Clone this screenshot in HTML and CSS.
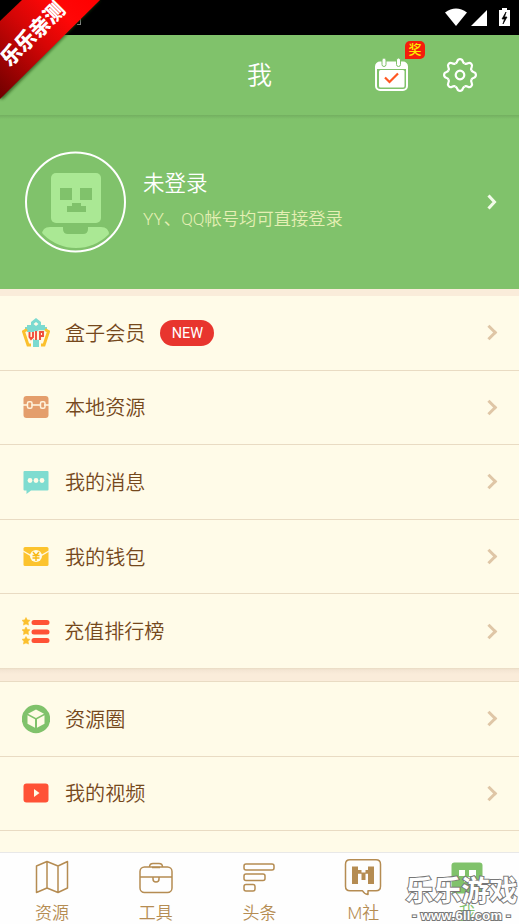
FILE: index.html
```html
<!DOCTYPE html>
<html lang="zh-CN">
<head>
<meta charset="utf-8">
<title>我</title>
<link rel="stylesheet" href="styles.css">
</head>
<body>
<div class="app">
  <div class="status">
    <span class="status-note"></span>
    <svg width="68" height="20" viewBox="0 0 68 20" fill="#fff">
      <path d="M0 4.500Q11-3.500 22 4.500L11 18Z"/>
      <path d="M26 18 42 2V18Z"/>
      <path d="M54 2h3V0h5v2h3v16H54Z"/>
      <path d="m61 4-4 7h2.500l-1.500 5 4-7h-2.500Z" fill="#000" stroke="#000" stroke-width=".7"/>
    </svg>
  </div>
  <header class="header">
    <h1>我</h1>
    <div class="header-actions">
      <div class="checkin">
        <svg width="34" height="34" viewBox="0 0 34 34" fill="none">
          <rect x="1" y="4.500" width="31" height="27.500" rx="4" stroke="#fff" stroke-width="2"/>
          <path d="M1 11V8q0-3.500 4-3.500h23q4 0 4 3.500v3Z" fill="#fff"/>
          <rect x="4" y="12" width="25.500" height="17.500" rx="1.500" fill="#fff"/>
          <rect x="7" y="0" width="4" height="8.500" rx="2" fill="#fff" stroke="#80c26b"/>
          <rect x="21.500" y="0" width="4" height="8.500" rx="2" fill="#fff" stroke="#80c26b"/>
          <path d="m10 19.500 4.500 4.500 8.500-8.500" stroke="#ff5722" stroke-width="2.200"/>
        </svg>
        <span class="prize">奖</span>
      </div>
      <svg class="gear" width="36" height="36" viewBox="-18 -18 36 36" fill="none" stroke="#fff" stroke-width="2.200">
        <defs><path id="tooth" d="M-4.700-11.400C-1.600-12.700-3.800-15.900 0-15.900S1.600-12.700 4.700-11.400"/></defs>
        <use href="#tooth"/><use href="#tooth" transform="rotate(45)"/><use href="#tooth" transform="rotate(90)"/><use href="#tooth" transform="rotate(135)"/>
        <use href="#tooth" transform="rotate(180)"/><use href="#tooth" transform="rotate(225)"/><use href="#tooth" transform="rotate(270)"/><use href="#tooth" transform="rotate(315)"/>
        <circle r="4.300"/>
      </svg>
    </div>
  </header>

  <section class="profile">
    <svg class="avatar" width="102" height="102" viewBox="0 0 102 102">
      <defs><clipPath id="bust"><circle cx="51" cy="51" r="46"/></clipPath></defs>
      <circle cx="50.500" cy="51" r="49.500" fill="none" stroke="#fff" stroke-width="2"/>
      <rect x="26" y="22" width="50" height="50" rx="5" fill="#aae894"/>
      <path d="M35 37h12v12H35ZM55 37h12v12H55ZM47 52h9v3h5v6H42v-6h5Z" fill="#80c26b"/>
      <path d="M25 76h13v2q0 5 5 5h15q5 0 5-5v-2h13q8 0 8 8v18H17V84q0-8 8-8Z" fill="#aae894" clip-path="url(#bust)"/>
    </svg>
    <div class="profile-text">
      <div class="name">未登录</div>
      <div class="hint">YY、QQ帐号均可直接登录</div>
    </div>
    <svg width="10" height="16" viewBox="0 0 10 16" fill="none" stroke="#f2fbe9" stroke-width="3"><path d="m1.500 1.500 6 6.500-6 6.500"/></svg>
  </section>

  <ul class="list">
    <li>
      <svg class="icon" width="28" height="30" viewBox="0 0 28 30">
        <path d="m14 0 5 4v3h4v2h2v3h-2v2H5v-2H3V9h2V7h4V4ZM14 4l-2.500 2 2.500 2 2.500-2ZM11 21h6v8h-6Z" fill="#7bdad0" fill-rule="evenodd"/>
        <path d="m5 11.500-3.500 2L6 27h3M23 11.500l3.500 2L22 27h-3" fill="none" stroke="#fbc02d" stroke-width="3"/>
        <path d="M7.500 14v5l1.500 2 2-2v-5M14 13v9M18 22v-8h3v4h-3" fill="none" stroke="#fff8df" stroke-width="3.600"/>
        <path d="M7.500 14v5l1.500 2 2-2v-5M14 13v9M18 22v-8h3v4h-3" fill="none" stroke="#f04d3c" stroke-width="1.900"/>
      </svg>
      <span class="label">盒子会员</span><span class="new">NEW</span><i class="chev"></i>
    </li>
    <li>
      <svg class="icon" width="28" height="30" viewBox="0 0 28 30">
        <rect x="1.500" y="4" width="25" height="22" rx="3" fill="#e49e6c"/>
        <path d="M1 13h5M9.500 13h9M22 13h5" stroke="#fffae6" stroke-width="1.500"/>
        <g fill="none" stroke="#fff3dc" stroke-width="1.500"><rect x="5.500" y="9.700" width="4.500" height="6.500" rx="1.500"/><rect x="18.500" y="9.700" width="4.500" height="6.500" rx="1.500"/></g>
      </svg>
      <span class="label">本地资源</span><i class="chev"></i>
    </li>
    <li>
      <svg class="icon" width="28" height="30" viewBox="0 0 28 30">
        <path d="M2.500 4h23q1 0 1 1v17.500q0 1-1 1H9L4.500 27v-3.500h-2q-1 0-1-1V5q0-1 1-1Z" fill="#7fdcd0"/>
        <g fill="#fffbe6"><circle cx="8" cy="13.500" r="2.400"/><circle cx="14" cy="13.500" r="2.400"/><circle cx="20" cy="13.500" r="2.400"/></g>
      </svg>
      <span class="label">我的消息</span><i class="chev"></i>
    </li>
    <li>
      <svg class="icon" width="28" height="30" viewBox="0 0 28 30" fill="none">
        <rect x="1.500" y="5" width="25" height="19" rx="1.500" fill="#fcc32d"/>
        <path d="m1 9 7 4h12l7-4" stroke="#fff8df" stroke-width="1.400"/>
        <circle cx="14" cy="14" r="6" fill="#fffbe6"/>
        <path d="m11 10 3 3.500 3-3.500M10.500 13.500h7M10.500 16h7M14 13v6" stroke="#f8b815" stroke-width="1.400"/>
      </svg>
      <span class="label">我的钱包</span><i class="chev"></i>
    </li>
    <li>
      <svg class="icon" width="28" height="30" viewBox="0 0 28 30">
        <defs><path id="star" d="m0-4 1.300 2.400 2.700.4-1.900 2 .4 2.800L0 2.400-2.500 3.600l.4-2.800-1.900-2 2.700-.4Z" fill="#fbc02d" stroke="#fbc02d" stroke-width=".6"/></defs>
        <use href="#star" x="4" y="5.500"/><use href="#star" x="4" y="15"/><use href="#star" x="4" y="24.500"/>
        <path d="M12 6.500h13M12 16h13M12 24.500h13" stroke="#ff5236" stroke-width="5" stroke-linecap="round"/>
      </svg>
      <span class="label label-rank">充值排行榜</span><i class="chev"></i>
    </li>
  </ul>

  <ul class="list list-second">
    <li>
      <svg class="icon" width="28" height="30" viewBox="0 0 28 30">
        <circle cx="14" cy="15" r="14.200" fill="#80c26b"/>
        <path d="m14 5.500 8 4.200-8 4.300-8-4.300ZM5.500 11.200l7.500 4v8.500l-7.500-4ZM22.500 11.200l-7.500 4v8.500l7.500-4Z" fill="#fffbe6"/>
      </svg>
      <span class="label">资源圈</span><i class="chev"></i>
    </li>
    <li>
      <svg class="icon" width="28" height="30" viewBox="0 0 28 30">
        <rect x="1.500" y="5.500" width="25" height="19" rx="3" fill="#ff5236"/>
        <path d="m12 11 5.500 4-5.500 4Z" fill="#fffbe6"/>
      </svg>
      <span class="label">我的视频</span><i class="chev"></i>
    </li>
  </ul>

  <nav class="tabs">
    <a>
      <svg width="38" height="38" viewBox="0 0 38 38"><path d="M3.500 7 14 2.500 25 7l9.500-4.500V29L25 33.500 14 29 3.500 33.500ZM14 2.500V29M25 7v26.500"/></svg>
      <span>资源</span>
    </a>
    <a>
      <svg width="38" height="38" viewBox="0 0 38 38"><rect x="3" y="8" width="32" height="25.500" rx="4.500"/><path d="M12.500 8q0-3.500 3.500-3.500h6q3.500 0 3.500 3.500M15 8.500h8M3 18h32M16 18v2a3 3 0 0 0 6 0v-2"/></svg>
      <span>工具</span>
    </a>
    <a>
      <svg width="38" height="38" viewBox="0 0 38 38"><rect x="4" y="5" width="30" height="6" rx="2"/><rect x="4" y="15" width="21" height="6.500" rx="2"/><rect x="4" y="25.500" width="11" height="6.500" rx="2"/></svg>
      <span>头条</span>
    </a>
    <a>
      <svg width="38" height="38" viewBox="0 0 38 38"><path d="M6 .8h26q4.500 0 4.500 4.500v22q0 4.500-4.500 4.500h-8v3.700q-4-.5-5.500-3.700H6q-4.500 0-4.500-4.500v-22Q1.500.8 6 .8Z"/><path d="M8 7.500h6V11h3.500v2.500h4V11H24V7.500h6V25h-6V14.800h-2.500V21h-4v-6.200H14V25H8Z" fill="#b58c52" stroke="none"/></svg>
      <span>M社</span>
    </a>
    <a class="active">
      <svg width="38" height="38" viewBox="0 0 38 38"><rect x="3.500" y="3.500" width="31" height="31" rx="3" fill="#80c26b" stroke="none"/><path d="M11 11h6v6h-6ZM21 11h7v6h-7ZM16 18h6v5h-6Z" fill="#fff" stroke="none"/></svg>
      <span>我</span>
    </a>
  </nav>

  <svg class="ribbon" width="104" height="104" viewBox="0 0 104 104">
    <defs>
      <linearGradient id="red" gradientUnits="userSpaceOnUse" x1="0" y1="98" x2="98" y2="0"><stop offset="0" stop-color="#700000"/><stop offset=".5" stop-color="#d60606"/><stop offset=".75" stop-color="#ff0707"/><stop offset="1" stop-color="#f00"/></linearGradient>
      <filter id="soft"><feGaussianBlur stdDeviation="1.500"/></filter>
    </defs>
    <path d="M24 0h77L3 99H0V24Z" fill="#163d0d" opacity=".65" filter="url(#soft)"/>
    <path d="M22 0h78L0 99V21Z" fill="url(#red)"/>
    <text transform="translate(32.500 33.500) rotate(-45)" text-anchor="middle" y="8" textLength="80" lengthAdjust="spacingAndGlyphs">乐乐亲测</text>
  </svg>
  <div class="watermark"><strong>乐乐游戏</strong><span>- www.6ll.com -</span></div>
</div>
</body>
</html>
```
FILE: styles.css
```css
* { box-sizing: border-box; }
body {
  margin: 0;
  background: #fffbe8;
  font-family: "Noto Sans", "Noto Sans CJK SC", sans-serif;
  font-family: Roboto, "Noto Sans CJK SC", sans-serif;
  font-weight: 360;
}
.app {
  position: relative;
  display: flex;
  flex-direction: column;
  width: 519px;
  height: 924px;
  overflow: hidden;
}
.status {
  display: flex;
  justify-content: space-between;
  flex: none;
  height: 35px;
  padding: 8px 6px 0 77px;
  background: #000;
}
.status-note {
  width: 4px;
  height: 6px;
  margin-top: 11px;
  border: 1px solid #888;
  border-left: 0;
}
.header {
  display: grid;
  grid-template-columns: 1fr auto 1fr;
  align-items: center;
  flex: none;
  height: 80px;
  background: #80c26b;
  color: #fff;
}
.header h1 {
  grid-column: 2;
  margin: 2px 0 0;
  font-size: 25px;
  font-weight: 350;
  line-height: 36px;
}
.header-actions {
  display: flex;
  align-items: center;
  justify-content: flex-end;
  gap: 33px;
  padding-right: 41px;
}
.checkin { position: relative; height: 34px; }
.checkin svg, .gear { display: block; }
.prize {
  position: absolute;
  top: -17px;
  left: 30px;
  width: 20px;
  height: 18px;
  border-radius: 5px 5px 5px 0;
  background: #f51d0c;
  color: #ffeb00;
  font-size: 13px;
  font-weight: 500;
  line-height: 18px;
  text-align: center;
}
.profile {
  display: flex;
  align-items: center;
  flex: none;
  height: 174px;
  padding: 0 22px 0 25px;
  background: linear-gradient(#73af60, #80c26b 4px);
}
.profile-text { flex: 1; margin: -2px 0 0 16px; }
.name {
  color: #fff;
  font-size: 21.5px;
  line-height: 36px;
}
.hint {
  color: #e5efb4;
  font-size: 17.3px;
  line-height: 34px;
}
.list {
  flex: none;
  margin: 0;
  padding: 0;
  border-top: 7px solid #faecda;
  list-style: none;
}
.list li {
  display: flex;
  align-items: center;
  height: 74.6px;
  padding: 0 22px;
  border-bottom: 1px solid #e9dbc3;
}
.label {
  margin: 2px 0 0 15px;
  color: #75481c;
  font-size: 20.1px;
  line-height: 30px;
}
.label-rank { margin-left: 14px; }
.new {
  width: 54px;
  height: 26px;
  margin-left: 15px;
  border-radius: 13px;
  background: #e8352e;
  color: #fff;
  font-size: 14.5px;
  font-weight: 400;
  line-height: 27px;
  text-align: center;
}
.chev {
  width: 11px;
  height: 11px;
  margin: 0 2px 0 auto;
  border: solid #dfc6a6;
  border-width: 3px 3px 0 0;
  transform: rotate(45deg);
}
.list-second {
  border-top: 0;
}
.list-second::before {
  display: block;
  height: 13px;
  margin-top: -1px;
  border-bottom: 1px solid #e9dbc3;
  background: linear-gradient(#e9dbc3, #f4e5d3 2px, #faecda 6px);
  content: "";
}
.tabs {
  display: grid;
  grid-template-columns: repeat(5, 1fr);
  height: 72px;
  flex: none;
  margin-top: auto;
  border-top: 1px solid #e8e8e8;
  background: #fefefe;
}
.tabs a {
  display: flex;
  flex-direction: column;
  align-items: center;
  padding-top: 6px;
  color: #b58c52;
  font-size: 17px;
  line-height: 26px;
}
.tabs svg {
  flex: none;
  fill: none;
  stroke: #b58c52;
  stroke-width: 1.5;
  stroke-linejoin: round;
}
.tabs span { margin-top: 3px; }
.tabs .active { color: #80c26b; }
.ribbon { position: absolute; top: 0; left: 0; }
.ribbon text {
  fill: #fff;
  font-family: "Noto Sans CJK SC", sans-serif;
  font-size: 21px;
  font-weight: 900;
}
.watermark {
  position: absolute;
  right: 0;
  bottom: -1px;
  display: flex;
  flex-direction: column;
  align-items: center;
  width: 115px;
  color: #fff;
  -webkit-text-stroke: 2px #777;
  paint-order: stroke fill;
}
.watermark strong {
  font-size: 28px;
  font-weight: 700;
  line-height: 30px;
  white-space: nowrap;
}
.watermark span {
  font-family: "Liberation Sans", sans-serif;
  font-size: 13px;
  font-weight: 700;
  line-height: 18px;
  letter-spacing: .3px;
  white-space: nowrap;
}
```
